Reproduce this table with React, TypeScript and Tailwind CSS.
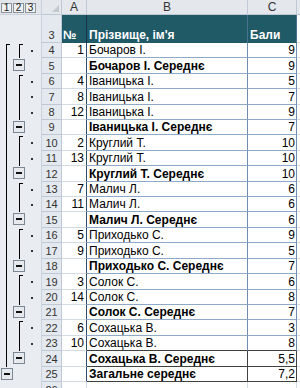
import React from 'react';

type Row = {
  n: number;
  a?: string;
  b: string;
  c: string;
  kind: 'detail' | 'sum' | 'total';
  start?: boolean;
  h: 15 | 16;
};

const rows: Row[] = [
  { n: 4, a: '1', b: 'Бочаров І.', c: '9', kind: 'detail', start: true, h: 15 },
  { n: 5, b: 'Бочаров І. Середнє', c: '9', kind: 'sum', h: 16 },
  { n: 6, a: '4', b: 'Іваницька І.', c: '5', kind: 'detail', start: true, h: 15 },
  { n: 7, a: '8', b: 'Іваницька І.', c: '7', kind: 'detail', h: 16 },
  { n: 8, a: '12', b: 'Іваницька І.', c: '9', kind: 'detail', h: 15 },
  { n: 9, b: 'Іваницька І. Середнє', c: '7', kind: 'sum', h: 15 },
  { n: 10, a: '2', b: 'Круглий Т.', c: '10', kind: 'detail', start: true, h: 16 },
  { n: 11, a: '13', b: 'Круглий Т.', c: '10', kind: 'detail', h: 15 },
  { n: 12, b: 'Круглий Т. Середнє', c: '10', kind: 'sum', h: 16 },
  { n: 13, a: '7', b: 'Малич Л.', c: '6', kind: 'detail', start: true, h: 15 },
  { n: 14, a: '11', b: 'Малич Л.', c: '6', kind: 'detail', h: 15 },
  { n: 15, b: 'Малич Л. Середнє', c: '6', kind: 'sum', h: 16 },
  { n: 16, a: '5', b: 'Приходько С.', c: '9', kind: 'detail', start: true, h: 15 },
  { n: 17, a: '9', b: 'Приходько С.', c: '5', kind: 'detail', h: 16 },
  { n: 18, b: 'Приходько С. Середнє', c: '7', kind: 'sum', h: 15 },
  { n: 19, a: '3', b: 'Солок С.', c: '6', kind: 'detail', start: true, h: 16 },
  { n: 20, a: '14', b: 'Солок С.', c: '8', kind: 'detail', h: 15 },
  { n: 21, b: 'Солок С. Середнє', c: '7', kind: 'sum', h: 15 },
  { n: 22, a: '6', b: 'Сохацька В.', c: '3', kind: 'detail', start: true, h: 16 },
  { n: 23, a: '10', b: 'Сохацька В.', c: '8', kind: 'detail', h: 15 },
  { n: 24, b: 'Сохацька В. Середнє', c: '5,5', kind: 'sum', h: 16 },
  { n: 25, b: 'Загальне середнє', c: '7,2', kind: 'total', h: 15 },
];

const Line = () => <div className="ml-[6px] w-px h-full bg-black" />;
const Bracket = () => (
  <div className="ml-[6px] mt-[1px] w-[4px] h-[calc(100%-1px)] border-l border-t border-black" />
);
const MinusBtn = ({ ml }: { ml: string }) => (
  <div
    className={`${ml} mt-[1px] w-[12px] h-[12px] border border-[#7d8794] bg-[#e6eaef] flex items-center justify-center`}
  >
    <div className="w-[6px] h-[2px] bg-[#111]" />
  </div>
);

function Gutter({ r }: { r: Row }) {
  let c1: React.ReactNode = <Line />;
  if (r.n === 4) c1 = <Bracket />;
  if (r.kind === 'total') c1 = <MinusBtn ml="ml-[1px]" />;
  let c2: React.ReactNode = null;
  if (r.kind === 'sum') c2 = <MinusBtn ml="ml-0" />;
  else if (r.kind === 'detail') c2 = r.start ? <Bracket /> : <Line />;
  return (
    <div className="w-[42px] h-full flex bg-[#e9edf2] border-r border-[#c9d1dc]">
      <div className="w-[13px] h-full">{c1}</div>
      <div className="w-[13px] h-full">{c2}</div>
      <div className="w-[15px] h-full flex items-center">
        {r.kind === 'detail' ? <div className="ml-[5px] w-[2px] h-[2px] bg-[#333]" /> : null}
      </div>
    </div>
  );
}

function RowHdr({ n }: { n: number }) {
  return (
    <div className="w-[20px] h-full flex items-end justify-center bg-[#e4e9ef] border-r border-b border-[#bfc8d4] text-[11px] leading-[12px] text-[#333] pb-[1px]">
      {n}
    </div>
  );
}

function DataRow({ r }: { r: Row }) {
  const dark = r.n === 24 || r.n === 25;
  const bold = r.kind !== 'detail';
  const rowBorder = dark || r.n === 23 ? 'border-[#404040]' : 'border-[#8fa9c8]';
  const vBorder = dark ? 'border-r-[#404040]' : 'border-r-[#6f8db2]';
  return (
    <div className={`flex ${r.h === 15 ? 'h-[15px]' : 'h-[16px]'}`}>
      <Gutter r={r} />
      <RowHdr n={r.n} />
      <div className="w-[25px] h-full flex items-end justify-end pr-[2px] border-b border-b-[#d5dbe3] border-r border-r-[#2f4c6c] leading-[11px] pb-[1px]">
        {r.a}
      </div>
      <div
        className={`w-[161px] h-full flex items-end pl-[2px] border-b ${rowBorder} border-r ${vBorder} leading-[11px] pb-[1px] ${
          bold ? 'font-bold' : ''
        }`}
      >
        {r.b}
      </div>
      <div
        className={`w-[49px] h-full flex items-end justify-end pr-[1px] border-b ${rowBorder} border-r ${vBorder} leading-[11px] pb-[1px]`}
      >
        {r.c}
      </div>
      <div className="flex-1 h-full border-b border-[#d5dbe3]" />
    </div>
  );
}

export default function App() {
  return (
    <div className="w-[300px] h-[388px] overflow-hidden bg-white font-['Liberation_Sans',Arial,sans-serif] text-[12px] text-black">
      {/* column header row */}
      <div className="flex h-[15px]">
        <div className="w-[42px] h-full flex items-start gap-px pl-[1px] pt-[3px] bg-[#e2e5e9] border-r border-b border-[#c9d1dc]">
          {['1', '2', '3'].map((l) => (
            <div
              key={l}
              className="w-[11px] h-[10px] flex items-center justify-center border border-[#8e949c] bg-[#eef0f2] text-[10px] leading-none text-[#222]"
            >
              {l}
            </div>
          ))}
        </div>
        <div className="w-[20px] h-full flex items-end justify-end bg-[#e4e8ed] border-r border-b border-[#bfc8d4] pr-[2px] pb-[2px]">
          <div className="w-0 h-0 border-l-[7px] border-l-transparent border-b-[7px] border-b-[#c4c9cf]" />
        </div>
        <div className="w-[25px] h-full flex items-center justify-center bg-[#e4e8ed] border-r border-b border-[#bfc8d4] text-[12px] text-[#333] leading-none">
          A
        </div>
        <div className="w-[161px] h-full flex items-center justify-center bg-[#e4e8ed] border-r border-b border-[#bfc8d4] text-[12px] text-[#333] leading-none">
          B
        </div>
        <div className="w-[49px] h-full flex items-center justify-center bg-[#e4e8ed] border-r border-b border-[#bfc8d4] text-[12px] text-[#333] leading-none">
          C
        </div>
        <div className="flex-1 h-full bg-[#e4e8ed] border-b border-[#bfc8d4]" />
      </div>
      {/* row 3 header */}
      <div className="flex h-[28px]">
        <div className="w-[42px] h-full bg-[#e9edf2] border-r border-[#c9d1dc]" />
        <RowHdr n={3} />
        <div className="w-[25px] h-full flex items-end pl-[1px] bg-[#215a67] border-r border-[#17324a] text-white font-bold leading-[11px] pb-[2px]">
          №
        </div>
        <div className="w-[161px] h-full flex items-end pl-[2px] bg-[#215a67] border-r border-[#4b7390] text-white font-bold leading-[11px] pb-[2px]">
          Прізвище, ім'я
        </div>
        <div className="w-[49px] h-full flex items-end pl-[2px] bg-[#215a67] border-r border-[#4b7390] text-white font-bold leading-[11px] pb-[2px]">
          Бали
        </div>
        <div className="flex-1 h-full border-b border-[#d5dbe3]" />
      </div>
      {rows.map((r) => (
        <DataRow key={r.n} r={r} />
      ))}
      {/* row 26 partial */}
      <div className="flex h-[16px]">
        <div className="w-[42px] h-full bg-[#e9edf2] border-r border-[#c9d1dc]" />
        <RowHdr n={26} />
        <div className="w-[25px] h-full border-r border-[#d5dbe3]" />
        <div className="w-[161px] h-full border-r border-[#d5dbe3]" />
        <div className="w-[49px] h-full border-r border-[#d5dbe3]" />
        <div className="flex-1 h-full" />
      </div>
    </div>
  );
}
